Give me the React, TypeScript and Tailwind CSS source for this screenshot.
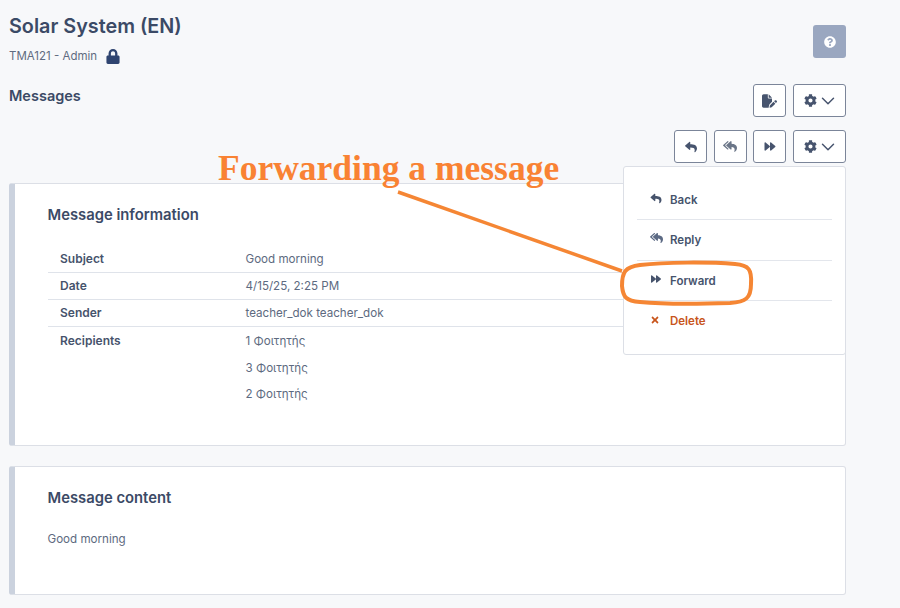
import React from "react";
import { FaReply, FaReplyAll, FaForward, FaCog, FaLock, FaQuestionCircle, FaTimes } from "react-icons/fa";
import { FaFilePen } from "react-icons/fa6";
import { LuChevronDown } from "react-icons/lu";

const IconBtn = ({ children }: { children: React.ReactNode }) => (
  <button className="w-[33px] h-[33px] flex items-center justify-center bg-white border border-[#7b8599] rounded-[3px] text-[#47546e]">
    {children}
  </button>
);

const GearBtn = () => (
  <button className="w-[53px] h-[33px] flex items-center justify-start pl-[10px] bg-white border border-[#7b8599] rounded-[3px] text-[#47546e]">
    <FaCog className="w-[13px] h-[13px]" />
    <LuChevronDown className="w-[22px] h-[22px]" strokeWidth={1.6} />
  </button>
);

const Row = ({ label, value }: { label: string; value: string }) => (
  <div className="flex h-[27px] items-center border-b border-[#dfe3ea]">
    <div className="w-[198px] pl-[12.5px] text-[12px] font-semibold text-[#46536c]">{label}</div>
    <div className="pt-[1px] text-[11.6px] text-[#5d6a80]">{value}</div>
  </div>
);

const MenuItem = ({ icon, label, cls = "text-[#46536c]", line = true }: { icon: React.ReactNode; label: string; cls?: string; line?: boolean }) => (
  <div className={`h-[40.3px] flex items-center pl-[13px] ${line ? "border-b border-[#e3e6ec]" : ""} ${cls}`}>
    <span className="w-[20px] -mt-[3px] flex">{icon}</span>
    <span className="text-[11.5px] font-semibold pt-[2px]">{label}</span>
  </div>
);

export default function App() {
  return (
    <div className="relative w-[900px] h-[608px] overflow-hidden bg-[#f7f8fa] font-['Inter','Liberation_Sans',sans-serif]">
      <div className="w-[846px] pl-[9px] pt-[13px]">
        <div className="flex justify-between items-start h-[71px]">
          <div>
            <h1 className="text-[19.8px] leading-[27px] font-semibold text-[#3b4a66]">Solar System (EN)</h1>
            <div className="mt-[8px] flex items-center gap-[9px] text-[11.5px] text-[#5f6b80]">
              <span>TMA121 - Admin</span>
              <FaLock className="w-[14px] h-[15px] text-[#2f4470]" />
            </div>
          </div>
          <div className="mt-[12px] w-[33px] h-[33px] flex items-center justify-center bg-[#9aa7c0] rounded-[3px] text-white">
            <FaQuestionCircle className="w-[12px] h-[12px]" />
          </div>
        </div>
        <div className="flex justify-between items-start h-[46px]">
          <h2 className="text-[14.5px] leading-[24px] font-semibold text-[#3b4a66]">Messages</h2>
          <div className="flex gap-[6.6px]">
            <IconBtn><FaFilePen className="w-[15px] h-[14px]" /></IconBtn>
            <GearBtn />
          </div>
        </div>
        <div className="flex justify-end gap-[6.6px] h-[53px]">
          <IconBtn><FaReply className="w-[12px] h-[12px]" /></IconBtn>
          <IconBtn><FaReplyAll className="w-[14px] h-[13px] text-[#6b7688]" /></IconBtn>
          <IconBtn><FaForward className="w-[12px] h-[11px]" /></IconBtn>
          <GearBtn />
        </div>
        <section className="h-[263px] bg-white border border-[#dcdfe6] border-l-[6px] border-l-[#cbd2de] rounded-[3px] pl-[32.5px] pr-[32px] pt-[21px]">
          <h3 className="text-[14.8px] leading-[20px] font-semibold text-[#3b4a66]">Message information</h3>
          <div className="mt-[21px]">
            <Row label="Subject" value="Good morning" />
            <Row label="Date" value="4/15/25, 2:25 PM" />
            <Row label="Sender" value="teacher_dok teacher_dok" />
            <div className="flex pt-[6px]">
              <div className="w-[198px] pl-[12.5px] text-[12px] leading-[15px] font-semibold text-[#46536c]">Recipients</div>
              <div className="pt-[1px] flex flex-col gap-[11.5px] text-[11.6px] leading-[15px] text-[#5d6a80]">
                <span>1 Φοιτητής</span>
                <span>3 Φοιτητής</span>
                <span>2 Φοιτητής</span>
              </div>
            </div>
          </div>
        </section>
        <section className="mt-[20px] h-[129px] bg-white border border-[#dcdfe6] border-l-[6px] border-l-[#cbd2de] rounded-[3px] pl-[32.5px] pt-[21px]">
          <h3 className="text-[14.8px] leading-[20px] font-semibold text-[#3b4a66]">Message content</h3>
          <p className="mt-[23px] text-[11.6px] leading-[16px] text-[#5d6a80]">Good morning</p>
        </section>
      </div>

      <div className="absolute left-[623px] top-[166px] w-[223px] h-[189px] bg-white border border-[#dcdfe6] rounded-[3px] px-[13px] pt-[13px]">
        <MenuItem icon={<FaReply className="w-[12px] h-[11px]" />} label="Back" />
        <MenuItem icon={<FaReplyAll className="w-[13px] h-[12px] text-[#5c6a84]" />} label="Reply" />
        <MenuItem icon={<FaForward className="w-[12px] h-[10px]" />} label="Forward" />
        <MenuItem icon={<FaTimes className="w-[10px] h-[10px]" />} label="Delete" cls="text-[#c8551c]" line={false} />
      </div>

      <div className="absolute left-[218px] top-[148px] text-[35.5px] leading-[40px] font-bold text-[#f98233] whitespace-nowrap font-['Liberation_Serif',serif]">
        Forwarding a message
      </div>

      <svg className="absolute left-0 top-0 pointer-events-none" width="900" height="608" fill="none" stroke="#f58634">
        <path d="M398 192 L622 271" strokeWidth="3.5" />
        <path d="M640 265 C665 262 710 262 735 264 C749 265 752 270 751 284 C751 298 746 302 730 303 C700 304 660 304 640 302 C626 301 623 297 622 286 C622 272 625 267 640 265 Z" strokeWidth="4" />
      </svg>
    </div>
  );
}
